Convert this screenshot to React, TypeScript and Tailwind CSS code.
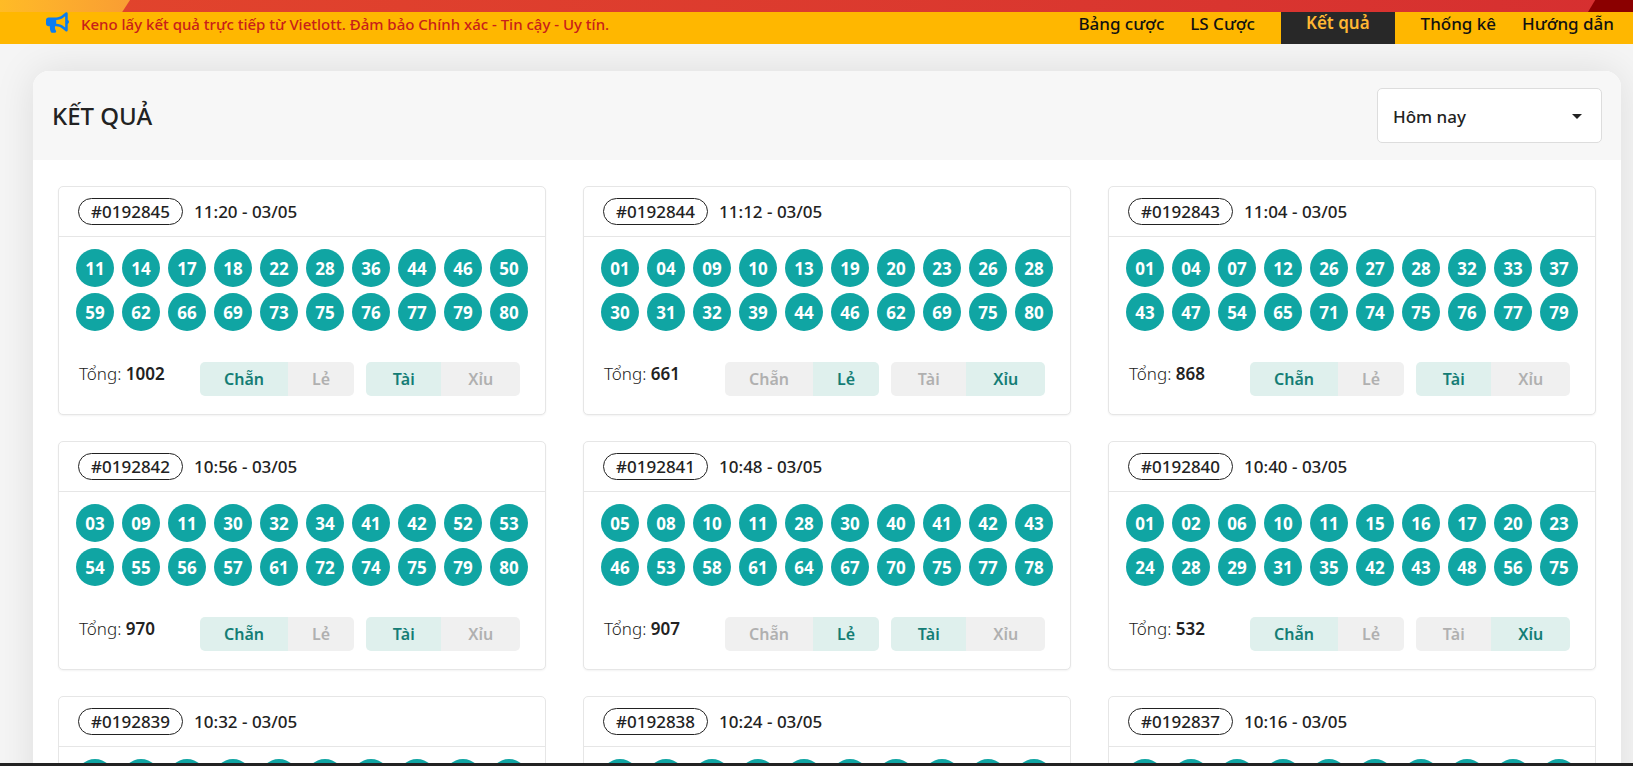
import { clsx } from "clsx";
import { FaBullhorn } from "react-icons/fa";

interface Draw {
  id: string;
  time: string;
  numbers: string[];
  total: number;
  even: boolean;
  big: boolean;
}

function draw(id: string, time: string, numbers: string, total: number, even: boolean, big: boolean): Draw {
  return { id, time, numbers: numbers.split(" "), total, even, big };
}

const draws: Draw[] = [
  draw("#0192845", "11:20 - 03/05", "11 14 17 18 22 28 36 44 46 50 59 62 66 69 73 75 76 77 79 80", 1002, true, true),
  draw("#0192844", "11:12 - 03/05", "01 04 09 10 13 19 20 23 26 28 30 31 32 39 44 46 62 69 75 80", 661, false, false),
  draw("#0192843", "11:04 - 03/05", "01 04 07 12 26 27 28 32 33 37 43 47 54 65 71 74 75 76 77 79", 868, true, true),
  draw("#0192842", "10:56 - 03/05", "03 09 11 30 32 34 41 42 52 53 54 55 56 57 61 72 74 75 79 80", 970, true, true),
  draw("#0192841", "10:48 - 03/05", "05 08 10 11 28 30 40 41 42 43 46 53 58 61 64 67 70 75 77 78", 907, false, true),
  draw("#0192840", "10:40 - 03/05", "01 02 06 10 11 15 16 17 20 23 24 28 29 31 35 42 43 48 56 75", 532, true, false),
];

// draws whose numbers are still below the fold
const nextDraws = [
  { id: "#0192839", time: "10:32 - 03/05" },
  { id: "#0192838", time: "10:24 - 03/05" },
  { id: "#0192837", time: "10:16 - 03/05" },
];

const navItems = ["Bảng cược", "LS Cược", "Kết quả", "Thống kê", "Hướng dẫn"];

function TopBanner() {
  return (
    <div className="flex h-3 shrink-0 justify-between bg-linear-to-r from-[#e2452c] to-[#d62f30]">
      <div className="w-[130px] bg-linear-to-r from-[#ffbb26] to-[#f99d33] [clip-path:polygon(0_0,100%_0,94%_100%,0_100%)]" />
      <div className="w-[45px] bg-[#8b0000] [clip-path:polygon(16%_0,100%_0,100%_100%,0_100%)]" />
    </div>
  );
}

function NavBar() {
  return (
    <header className="flex h-8 shrink-0 justify-between bg-[#ffb700] pr-[6px] pl-[46px]">
      <p className="flex h-6 items-center gap-3 text-[15px] font-medium whitespace-nowrap text-[#c8201a]">
        <FaBullhorn className="mb-1 size-[23px] text-[#0a7cf0]" />
        Keno lấy kết quả trực tiếp từ Vietlott. Đảm bảo Chính xác - Tin cậy - Uy tín.
      </p>
      <nav className="flex text-[17px] leading-6 font-medium whitespace-nowrap text-[#111]">
        {navItems.map((item) => (
          <a
            key={item}
            href="#"
            className={clsx(
              item === "Kết quả"
                ? "mx-[13px] bg-[#282828] px-[25px] leading-[22px] font-semibold text-[#ffb733]"
                : "px-[13px]"
            )}
          >
            {item}
          </a>
        ))}
      </nav>
    </header>
  );
}

function CardHeader({ id, time }: { id: string; time: string }) {
  return (
    <div className="flex h-[50px] items-center gap-[11px] border-b border-[#e6e6e6] px-[19px] text-[17px] font-medium">
      <span className="flex h-[27px] items-center rounded-full border border-[#222] px-3">{id}</span>
      <span>{time}</span>
    </div>
  );
}

function Pair({ first, second, firstOn }: { first: string; second: string; firstOn: boolean }) {
  const on = "bg-[#dff0ed] text-[#147d75]";
  const off = "bg-[#f0f0f0] text-[#b0b0b0]";
  return (
    <div className="flex h-[34px] w-[154px] overflow-hidden rounded-[5px] text-base leading-[34px] font-semibold">
      <span className={clsx("grow px-5 text-center", firstOn ? on : off)}>{first}</span>
      <span className={clsx("grow px-5 text-center", firstOn ? off : on)}>{second}</span>
    </div>
  );
}

function DrawCard({ id, time, numbers, total, even, big }: Draw) {
  return (
    <article className="rounded-[5px] border border-[#e6e6e6] bg-white shadow-xs">
      <CardHeader id={id} time={time} />
      <div className="grid grid-cols-10 gap-x-2 gap-y-[6px] px-[17px] pt-3">
        {numbers.map((n) => (
          <span
            key={n}
            className="flex h-[38px] items-center justify-center rounded-full bg-[#10a5a3] pt-0.5 text-[17px] font-bold text-white"
          >
            {n}
          </span>
        ))}
      </div>
      <div className="flex gap-3 pt-[31px] pr-[25px] pb-[18px] pl-5">
        <p className="grow text-[17px] leading-6 font-light">
          Tổng: <span className="font-semibold">{total}</span>
        </p>
        <Pair first="Chẵn" second="Lẻ" firstOn={even} />
        <Pair first="Tài" second="Xỉu" firstOn={big} />
      </div>
    </article>
  );
}

function PendingCard({ id, time }: { id: string; time: string }) {
  return (
    <article className="rounded-t-[5px] border border-[#e6e6e6] bg-white">
      <CardHeader id={id} time={time} />
      <div className="grid grid-cols-10 gap-x-2 px-[17px] pt-3">
        {Array.from({ length: 10 }, (_, i) => (
          <span key={i} className="h-[38px] rounded-full bg-[#10a5a3]" />
        ))}
      </div>
    </article>
  );
}

export default function App() {
  return (
    <div className="flex h-screen flex-col overflow-hidden bg-[#f5f5f5] font-['Noto_Sans',sans-serif] text-[#222]">
      <TopBanner />
      <NavBar />
      <main className="min-h-0 grow overflow-hidden pt-[27px] pr-3 pl-[33px]">
        <section className="rounded-t-2xl bg-white shadow-[0_0_40px_rgba(0,0,0,0.1)]">
          <div className="flex h-[89px] items-center justify-between rounded-t-2xl bg-[#f7f7f7] px-[19px]">
            <h1 className="text-2xl font-medium">KẾT QUẢ</h1>
            <div className="relative">
              <select
                aria-label="Ngày"
                className="h-[55px] w-[225px] appearance-none rounded-[5px] border border-[#ddd] bg-white px-[15px] pt-0.5 text-[17px] font-medium"
              >
                <option>Hôm nay</option>
              </select>
              <svg viewBox="0 0 10 5" className="pointer-events-none absolute top-[26px] right-5 h-[5px] w-[10px]">
                <path d="M0 0h10L5 5z" fill="#222" />
              </svg>
            </div>
          </div>
          <div className="grid grid-cols-3 gap-x-[37px] gap-y-[26px] px-[25px] pt-[26px]">
            {draws.map((d) => (
              <DrawCard key={d.id} {...d} />
            ))}
            {nextDraws.map((d) => (
              <PendingCard key={d.id} {...d} />
            ))}
          </div>
        </section>
      </main>
      <footer className="h-[3px] shrink-0 bg-[#222]" />
    </div>
  );
}
